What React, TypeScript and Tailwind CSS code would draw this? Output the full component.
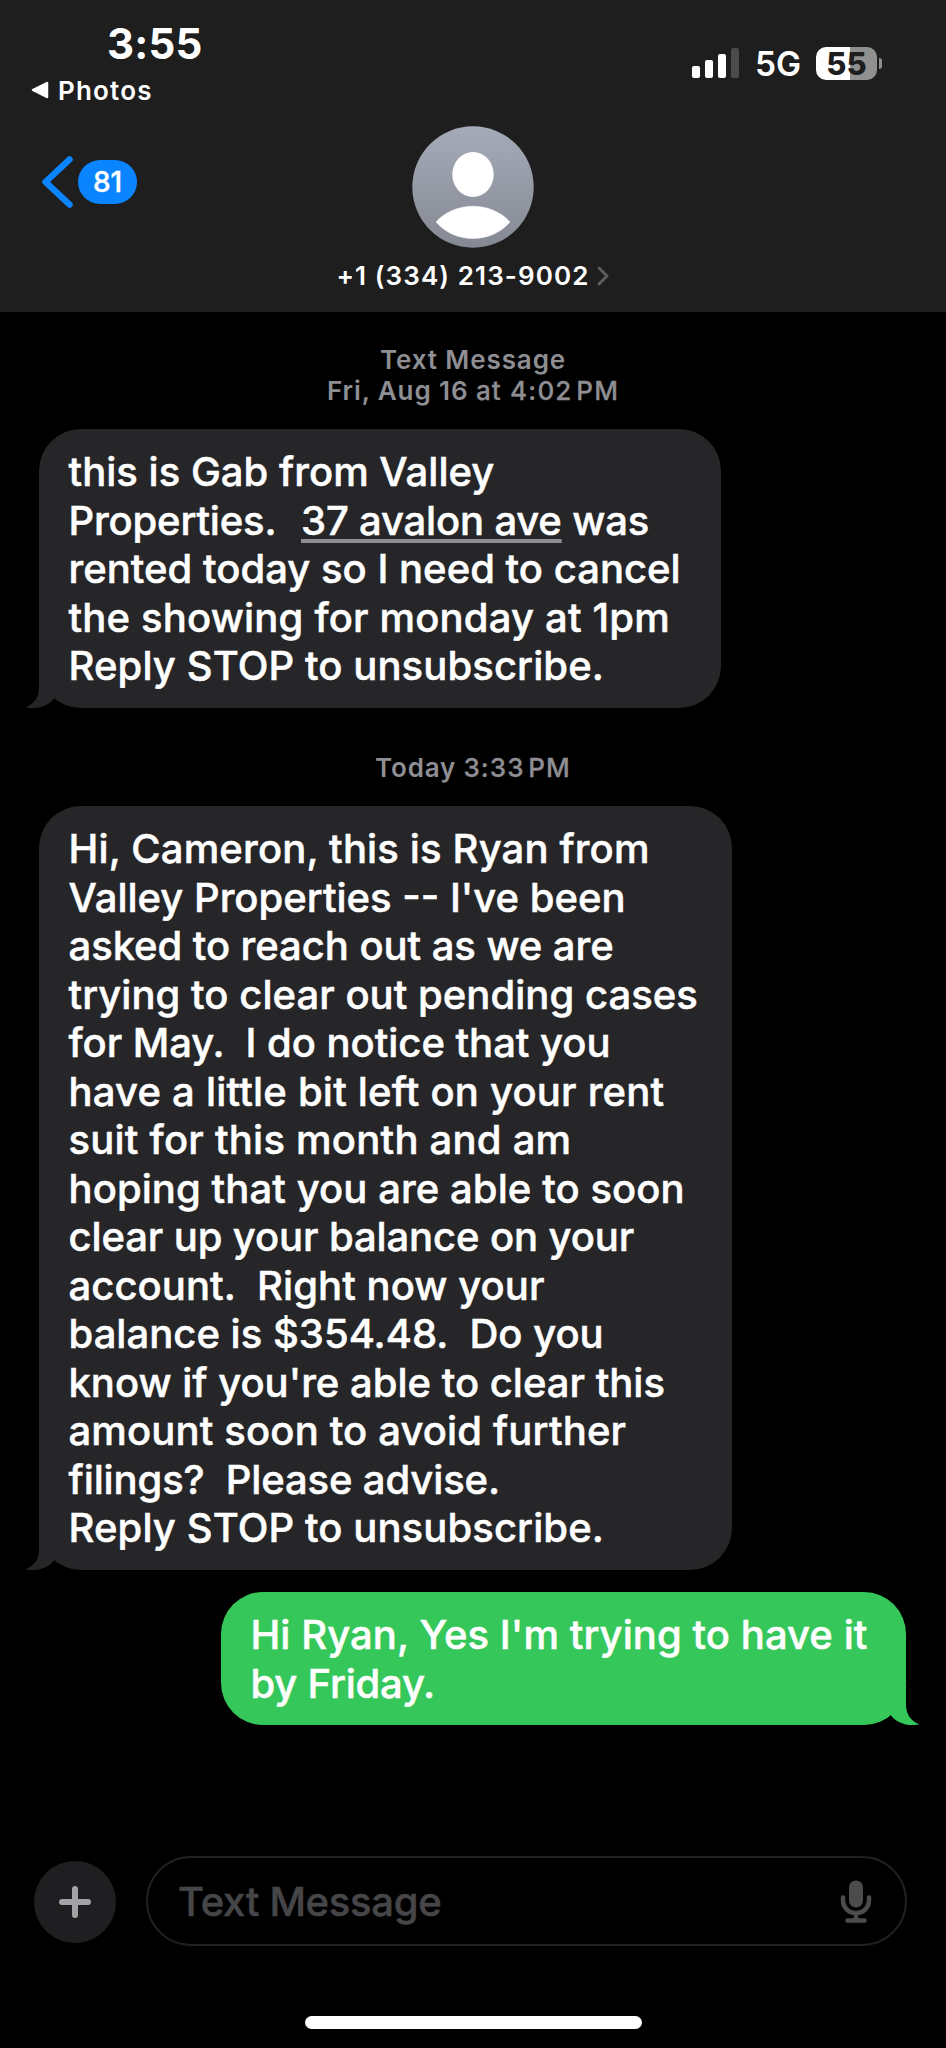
import clsx from "clsx"

type TextLine = [text: string, tracking: string]

const first: TextLine[] = [
    ["this is Gab from Valley", "tracking-[0.02px]"],
    ["Properties.  |37 avalon ave| was", "tracking-[-0.17px]"],
    ["rented today so I need to cancel", "tracking-[0.02px]"],
    ["the showing for monday at 1pm", "tracking-[0.18px]"],
    ["Reply STOP to unsubscribe.", "tracking-[0.1px]"],
]

const second: TextLine[] = [
    ["Hi, Cameron, this is Ryan from", "tracking-[0.15px]"],
    ["Valley Properties -- I've been", "tracking-[0px]"],
    ["asked to reach out as we are", "tracking-[-0.06px]"],
    ["trying to clear out pending cases", "tracking-[0.04px]"],
    ["for May.  I do notice that you", "tracking-[-0.03px]"],
    ["have a little bit left on your rent", "tracking-[0.21px]"],
    ["suit for this month and am", "tracking-[0.23px]"],
    ["hoping that you are able to soon", "tracking-[0.08px]"],
    ["clear up your balance on your", "tracking-[-0.11px]"],
    ["account.  Right now your", "tracking-[0.07px]"],
    ["balance is $354.48.  Do you", "tracking-[0.02px]"],
    ["know if you're able to clear this", "tracking-[0px]"],
    ["amount soon to avoid further", "tracking-[0.15px]"],
    ["filings?  Please advise.", "tracking-[-0.12px]"],
    ["Reply STOP to unsubscribe.", "tracking-[0.1px]"],
]

const reply: TextLine[] = [
    ["Hi Ryan, Yes I'm trying to have it", "tracking-[0.07px]"],
    ["by Friday.", "tracking-[-0.2px]"],
]

function Line({ text, tracking }: { text: string; tracking: string }) {
    // text between bars is a detected address
    const parts = text.split("|")
    return (
        <div className={tracking}>
            {parts.map((part, i) =>
                i % 2 ? (
                    <span key={i} className="ml-[4px] underline decoration-[#8e8e92] decoration-4 underline-offset-[4px] [text-decoration-skip-ink:none]">{part}</span>
                ) : (
                    part
                )
            )}
        </div>
    )
}

function Bubble({ lines, sent, className }: { lines: TextLine[]; sent?: boolean; className: string }) {
    return (
        <div className={clsx("relative rounded-[42px] pl-[29.5px] pt-[19px] whitespace-pre text-[40px] leading-[48.5px] font-medium [-webkit-text-stroke:0.5px_white] text-white", sent ? "bg-[#35c759]" : "bg-[#262628]", className)}>
            {lines.map(([text, tracking], i) => <Line key={i} text={text} tracking={tracking} />)}
            <svg
                viewBox="0 0 30 40"
                className={clsx("absolute bottom-0 w-[30px] h-[40px]", sent ? "right-[-14px] -scale-x-100 text-[#35c759]" : "left-[-14px] text-[#262628]")}
            >
                <path d="M14 0V20C14 29 9 36.500 0.500 39.200C12 42 23 38 29 30.500V0Z" fill="currentColor" />
            </svg>
        </div>
    )
}

function StatusBar() {
    return (
        <div className="flex justify-between h-[112px] pl-[31px] pr-[64px]">
            <div>
                <div className="pl-[76px] pt-[20px] text-[42px] leading-[48px] font-bold tracking-[0.2px]">3:55</div>
                <div className="flex items-center mt-[6px] h-[32px]">
                    <svg viewBox="0 0 18 18" className="w-[18px] h-[18px]">
                        <path d="M2 9L16 2V16Z" fill="white" stroke="white" strokeWidth="2.500" strokeLinejoin="round" />
                    </svg>
                    <span className="pl-[9px] text-[26px] font-semibold tracking-[1.2px]">Photos</span>
                </div>
            </div>
            <div className="flex items-center h-[34px] mt-[46px]">
                <div className="flex items-end gap-[5px] h-[30px]">
                    <div className="w-[8px] h-[12px] rounded-[2px] bg-white" />
                    <div className="w-[8px] h-[18px] rounded-[2px] bg-white" />
                    <div className="w-[8px] h-[24px] rounded-[2px] bg-white" />
                    <div className="w-[8px] h-[30px] rounded-[2px] bg-[#4b4b4b]" />
                </div>
                <div className="w-[77px] pl-[16px] pt-[2px] text-[33.5px] leading-[34px] font-semibold">5G</div>
                <div className="flex items-center justify-center w-[61px] h-[33px] rounded-[10px] bg-linear-to-r from-white from-55% to-[#909090] to-55% text-[31px] leading-[33px] font-extrabold text-[#1e1e1e]">55</div>
                <div className="w-[3px] h-[11px] ml-[2px] rounded-r-full bg-[#909090]" />
            </div>
        </div>
    )
}

function Header() {
    return (
        <div className="relative h-[200px] flex flex-col items-center pt-[14px]">
            <div className="absolute left-[41px] top-[43px] flex items-center">
                <svg viewBox="0 0 34 54" className="w-[34px] h-[54px]">
                    <path d="M28.500 4.500L4.500 27L28.500 49.500" fill="none" stroke="#0a84ff" strokeWidth="6.500" strokeLinecap="round" strokeLinejoin="round" />
                </svg>
                <div className="ml-[3px] flex items-center justify-center w-[59px] h-[44px] rounded-full bg-[#0a84ff] text-[28px] font-medium [-webkit-text-stroke:0.4px_white]">81</div>
            </div>
            <svg viewBox="0 0 122 122" className="w-[122px] h-[122px]">
                <defs>
                    <linearGradient id="avatar" x1="0" y1="0" x2="0" y2="1">
                        <stop offset="0" stopColor="#a5abb9" />
                        <stop offset="1" stopColor="#858993" />
                    </linearGradient>
                </defs>
                <circle cx="61" cy="61" r="60.700" fill="url(#avatar)" />
                <ellipse cx="61" cy="48.500" rx="20.700" ry="22.500" fill="white" />
                <path d="M24 96C43 75 79 75 98 96C79 118 43 118 24 96Z" fill="white" stroke="white" strokeWidth="0.500" />
            </svg>
            <div className="flex items-center mt-[12px] h-[32px]">
                <span className="text-[26px] leading-[32px] font-semibold tracking-[1.1px]">+1 (334) 213-9002</span>
                <svg viewBox="0 0 14 22" className="w-[14px] h-[22px] ml-[6px]">
                    <path d="M3 3L11 11L3 19" fill="none" stroke="#5c5c60" strokeWidth="3" strokeLinecap="round" strokeLinejoin="round" />
                </svg>
            </div>
        </div>
    )
}

export default function App() {
    return (
        <div className="w-[946px] h-[2048px] overflow-hidden flex flex-col bg-black text-white font-['Inter',sans-serif]">
            <div className="bg-[#1e1e1e]">
                <StatusBar />
                <Header />
            </div>

            <div className="flex flex-col h-[1544px] text-[26px] leading-[31px] text-[#8e8e93]">
                <div className="mt-[32px] text-center font-semibold tracking-[0.9px]">
                    <div>Text Message</div>
                    <div>Fri, Aug 16 <span className="font-medium tracking-[1.2px] [-webkit-text-stroke:0.3px_#8e8e93]">at 4:02<span className="tracking-[-0.8px]">{"\u2009"}</span>PM</span></div>
                </div>
                <Bubble lines={first} className="mt-[23px] ml-[39px] w-[682px] h-[279px]" />
                <div className="mt-[44px] text-center font-semibold tracking-[0.8px]">
                    Today <span className="font-medium tracking-[1.1px] [-webkit-text-stroke:0.3px_#8e8e93]">3:33<span className="tracking-[-0.8px]">{"\u2009"}</span>PM</span>
                </div>
                <Bubble lines={second} className="mt-[23px] ml-[39px] w-[693px] h-[764px]" />
                <Bubble lines={reply} sent className="mt-[22px] ml-[221px] w-[685px] h-[133px]" />
            </div>

            <div className="flex items-center h-[90px] pl-[34px]">
                <div className="flex items-center justify-center w-[82px] h-[82px] mt-[1px] rounded-full bg-[#1f1f21]">
                    <svg viewBox="0 0 34 34" className="w-[34px] h-[34px] mt-[1px]">
                        <path d="M17 4V30M4 17H30" stroke="#a3a3a5" strokeWidth="6" strokeLinecap="round" />
                    </svg>
                </div>
                <div className="flex items-center justify-between ml-[30px] w-[761px] h-[90px] rounded-full border-2 border-[#202021] pl-[30px] pr-[32px]">
                    <span className="pt-[1px] text-[40px] font-medium tracking-[-0.3px] text-[#464648] [-webkit-text-stroke:0.5px_#464648]">Text Message</span>
                    <svg viewBox="0 0 34 46" className="w-[34px] h-[46px] mt-[1px]" stroke="#4c4c4e" strokeLinecap="round" fill="none">
                        <rect x="10" y="1.500" width="14" height="27" rx="7" fill="#4c4c4e" stroke="none" />
                        <path d="M4 18.500V21C4 28.500 9.500 34 17 34S30 28.500 30 21V18.500M17 34V41M8.500 41.500H25.500" strokeWidth="4.500" />
                    </svg>
                </div>
            </div>
            <div className="mt-[70px] mx-auto w-[337px] h-[13px] rounded-full bg-white" />
        </div>
    )
}
